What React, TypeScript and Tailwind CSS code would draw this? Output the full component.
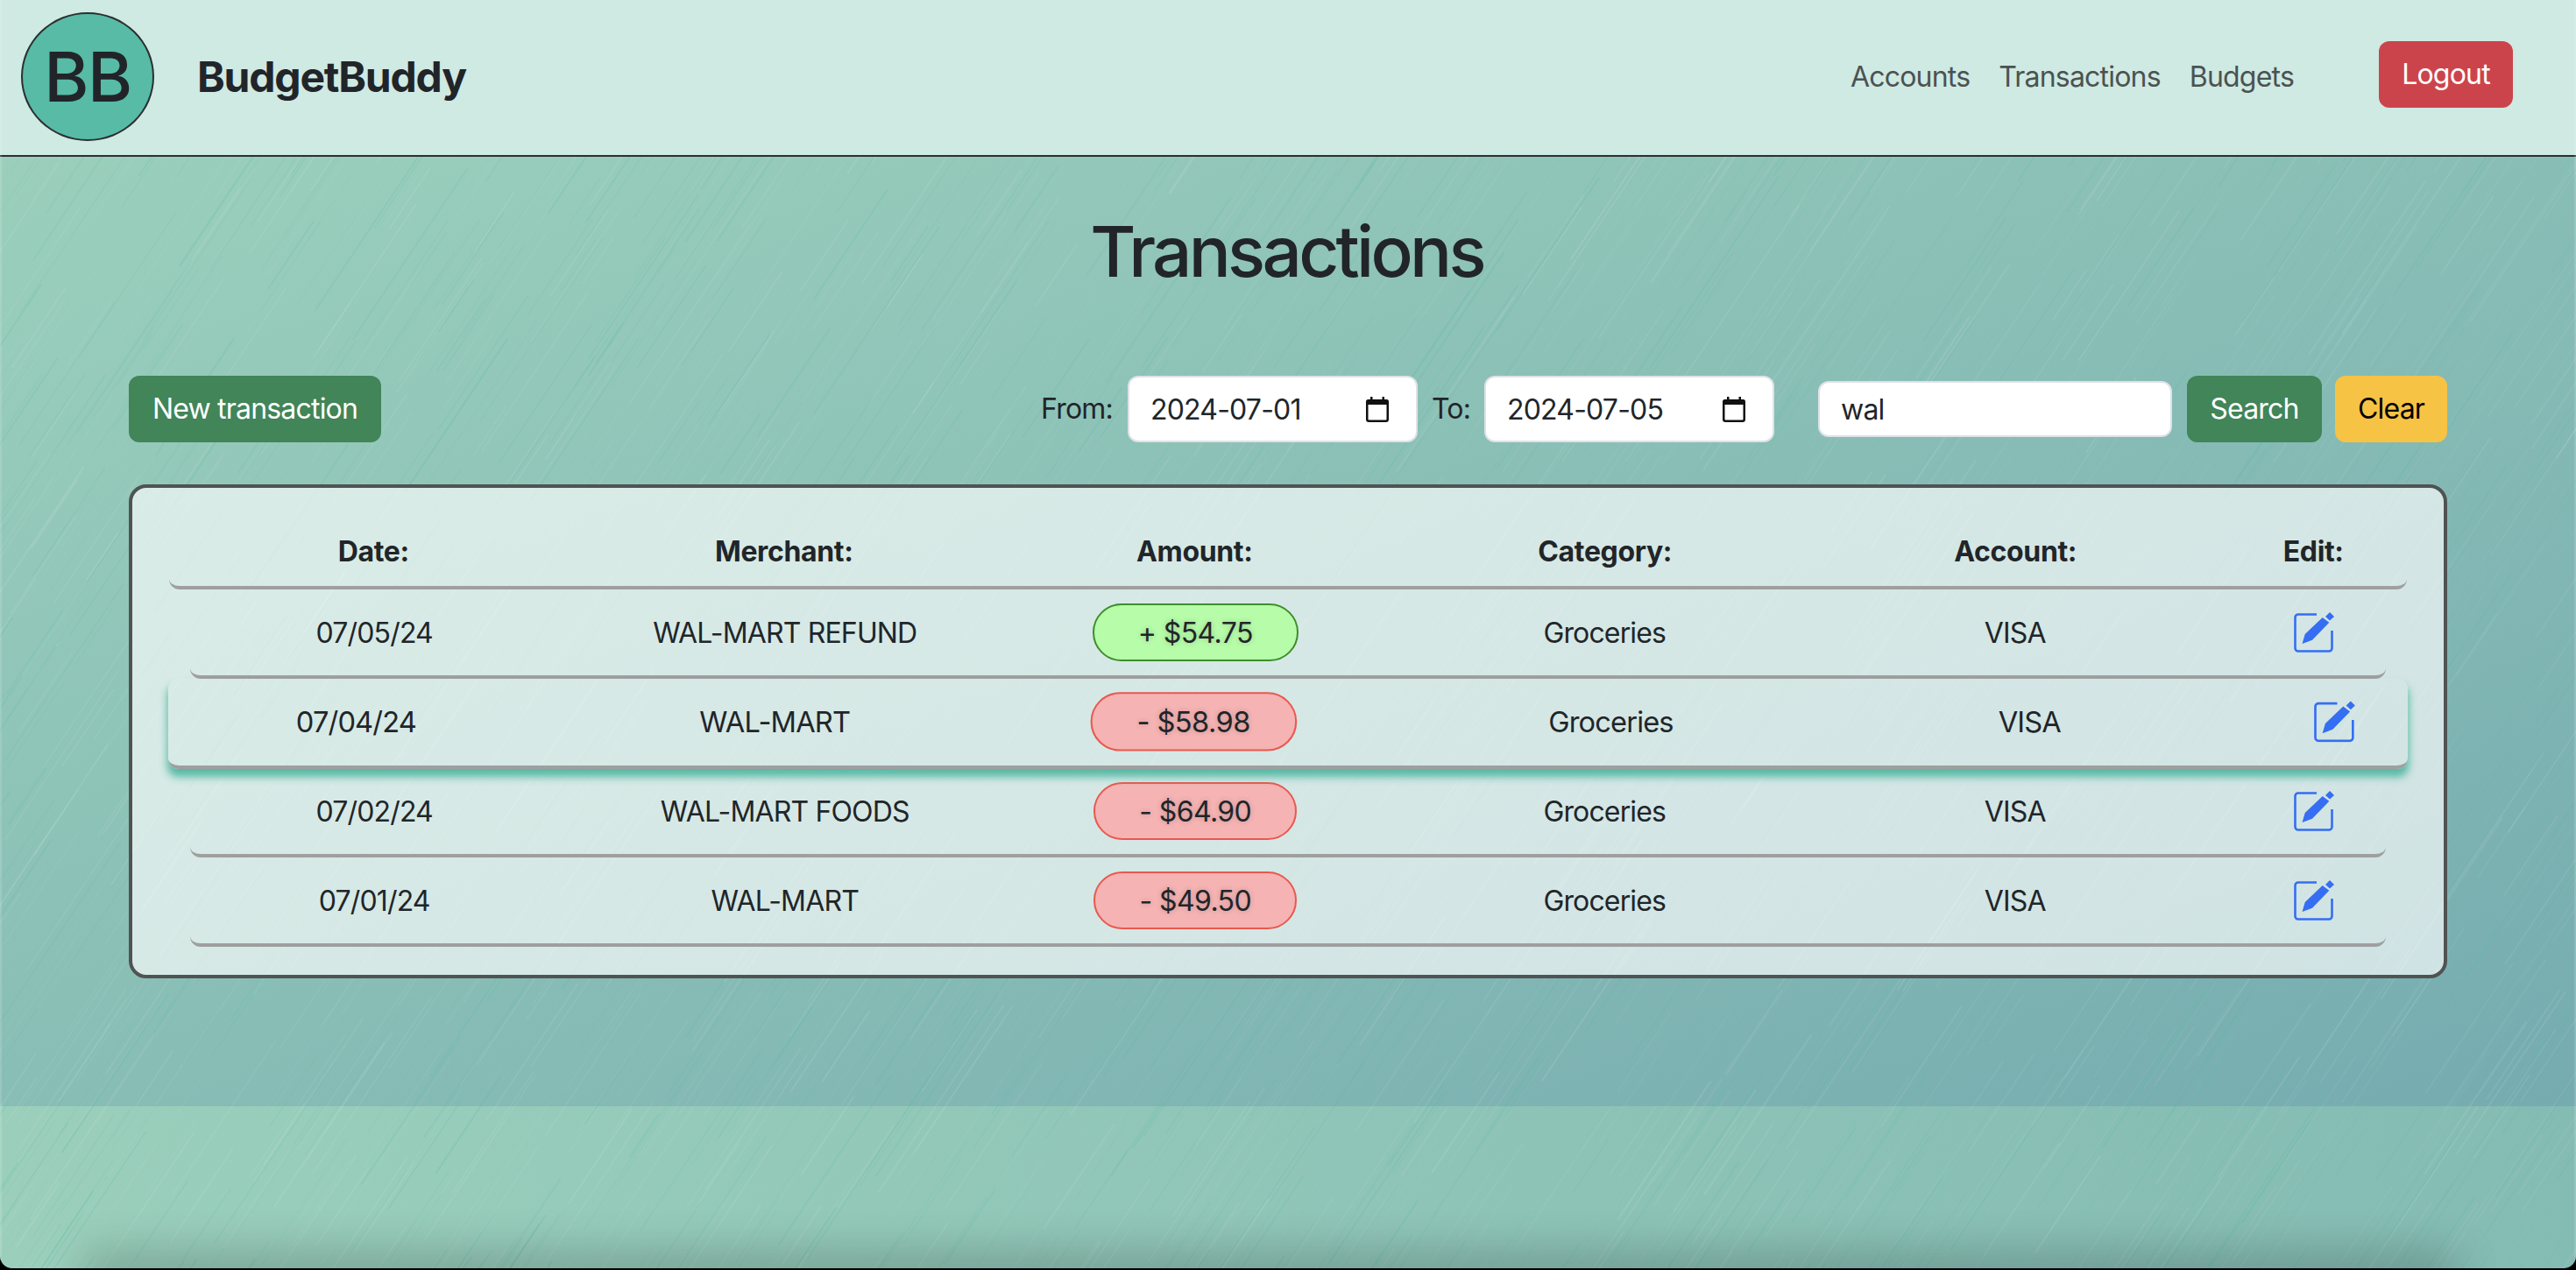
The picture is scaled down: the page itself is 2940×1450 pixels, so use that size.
import React from "react";

// seeded so the streaks stay the same on every render
function makeStreaks() {
  let seed = 42;
  const rnd = () => {
    seed = (seed * 16807) % 2147483647;
    return seed / 2147483647;
  };
  const out: { x: number; y: number; len: number; w: number; color: string; op: number }[] = [];
  for (let i = 0; i < 2600; i++) {
    const teal = rnd() < 0.45;
    out.push({
      x: rnd() * 3200,
      y: rnd() * 1500,
      len: 50 + rnd() * 170,
      w: 0.6 + rnd() * 1.4,
      color: teal ? "#5cbba6" : "#ffffff",
      op: teal ? 0.08 + rnd() * 0.18 : 0.03 + rnd() * 0.07,
    });
  }
  return out;
}

const streaks = makeStreaks();

function Streaks({ className }: { className: string }) {
  return (
    <svg className={className} width="2940" height="1450" viewBox="0 0 2940 1450" fill="none">
      {streaks.map((s, i) => (
        <line
          key={i}
          x1={s.x}
          y1={s.y}
          x2={s.x - s.len * 0.67}
          y2={s.y + s.len}
          stroke={s.color}
          strokeOpacity={s.op}
          strokeWidth={s.w}
        />
      ))}
    </svg>
  );
}

function EditIcon() {
  return (
    <svg width="47" height="46" viewBox="0 0 47 46" className="block">
      <path
        d="M26 2.5H5a3.5 3.5 0 0 0-3.5 3.5v35a3.5 3.5 0 0 0 3.5 3.5h35a3.5 3.5 0 0 0 3.5-3.5V21"
        fill="none"
        stroke="#356ef2"
        strokeWidth="2.6"
      />
      <path d="M9.5 36 12.7 25 32.7 6 40.3 11.7 21 31.7Z" fill="#356ef2" />
      <path d="M36 5 41 0 46 5 41 9.5Z" fill="#356ef2" />
    </svg>
  );
}

function CalendarIcon() {
  return (
    <svg width="26" height="29" viewBox="0 0 26 29" className="block shrink-0">
      <path d="M5 0h2.5v3H18.5V0H21v3h2.5A2.5 2.5 0 0 1 26 5.5V9H0V5.5A2.5 2.5 0 0 1 2.5 3H5Z" fill="#111" />
      <rect x="1.25" y="6" width="23.5" height="21.75" rx="2" fill="none" stroke="#111" strokeWidth="2.5" />
    </svg>
  );
}

function DateField({ value }: { value: string }) {
  return (
    <div className="flex h-[76px] w-[331px] items-center rounded-xl border-2 border-[#dee2e6] bg-white pl-[24px] pr-[31px]">
      <input readOnly value={value} className="w-full min-w-0 flex-1 bg-transparent pt-[2px] text-[32px] tracking-[-0.8px] text-[#212529] outline-none" />
      <CalendarIcon />
    </div>
  );
}

const cols = "grid grid-cols-[repeat(5,468.5px)_1fr] items-center text-center";

const rows = [
  { date: "07/05/24", merchant: "WAL-MART REFUND", amount: "+ $54.75", up: true },
  { date: "07/04/24", merchant: "WAL-MART", amount: "- $58.98", up: false, hover: true },
  { date: "07/02/24", merchant: "WAL-MART FOODS", amount: "- $64.90", up: false },
  { date: "07/01/24", merchant: "WAL-MART", amount: "- $49.50", up: false },
];

export default function App() {
  return (
    <div className="h-[1450px] w-full overflow-hidden bg-black font-['Inter',sans-serif] text-[#212529]">
      <div className="relative flex h-[1448px] flex-col overflow-hidden rounded-b-[14px]">
        <header className="flex h-[179px] shrink-0 items-center border-b-2 border-[#2b2f30] bg-[#cfe9e3] pb-[2px] pl-6 pr-[72px]">
          <div className="flex h-[147px] w-[152px] items-center justify-center rounded-[50%] border-2 border-[#2b2f30] bg-[#57bba6] text-[78px] font-medium leading-none tracking-[-1.5px]">
            BB
          </div>
          <div className="ml-[49px] text-[48px] font-bold leading-none tracking-[-1.2px]">BudgetBuddy</div>
          <nav className="ml-auto flex items-center gap-[33px] text-[32px] tracking-[-0.8px] text-[#4a5351]">
            <a>Accounts</a>
            <a>Transactions</a>
            <a>Budgets</a>
          </nav>
          <button className="mb-[6px] ml-[97px] h-[76px] w-[153px] rounded-xl bg-[#cc444b] text-[32px] tracking-[-0.8px] text-white">Logout</button>
        </header>

        <main className="relative h-[1084px] shrink-0 overflow-hidden bg-[linear-gradient(to_bottom_right,#9bcfbc,#76acb0)]">
          <Streaks className="absolute left-0 top-[-179px]" />
          <div className="relative px-[147px] pt-[60px]">
            <h1 className="pr-[3px] text-center text-[80px] font-medium leading-[96px] tracking-[-3.75px]">Transactions</h1>

            <div className="mt-[94px] flex items-center justify-between text-[32px] tracking-[-0.8px]">
              <button className="h-[76px] w-[288px] rounded-xl bg-[#418558] text-white">New transaction</button>
              <div className="flex items-center">
                <span className="mr-[17px]">From:</span>
                <DateField value="2024-07-01" />
                <span className="w-[76px] pl-[16px]">To:</span>
                <DateField value="2024-07-05" />
                <input
                  readOnly
                  value="wal"
                  className="ml-[50px] h-[64px] w-[404px] rounded-xl border-2 border-[#dee2e6] bg-white px-6 outline-none"
                />
                <button className="ml-[17px] h-[76px] w-[154px] rounded-xl bg-[#418558] text-white">Search</button>
                <button className="ml-[15px] h-[76px] w-[128px] rounded-xl bg-[#f6c344] text-black">Clear</button>
              </div>
            </div>

            <section className="mt-[48px] h-[564px] rounded-[20px] border-4 border-[#505353] bg-white/65 px-[42px] pt-[32px] text-[32px] tracking-[-0.85px]">
              <div className={`${cols} h-[84px] rounded-b-xl border-b-4 border-[#9f9f9f] pt-[2px] font-bold tracking-[-0.35px]`}>
                <div className="pr-[2px]">Date:</div>
                <div className="pr-[2px]">Merchant:</div>
                <div className="pr-[2px]">Amount:</div>
                <div className="pr-[2px]">Category:</div>
                <div className="pr-[2px]">Account:</div>
                <div className="pr-[2px]">Edit:</div>
              </div>
              {rows.map((r) => (
                <div
                  key={r.date}
                  className={
                    r.hover
                      ? "relative z-10 mx-6 h-[102px] scale-[1.02] rounded-xl border-b-4 border-[#9f9f9f] shadow-[0_8px_9px_#57b9a5]"
                      : "mx-6 h-[102px] rounded-b-xl border-b-4 border-[#9f9f9f]"
                  }
                >
                  <div className={`${cols} -mx-6 h-[98px]`}>
                    <div className="pt-[2px]">{r.date}</div>
                    <div className="pt-[2px]">{r.merchant}</div>
                    <div className="flex justify-center">
                      <span
                        className={
                          r.up
                            ? "rounded-full border-2 border-[#3e8e2c] bg-[#b6fca9] px-[50px] pb-[6px] pt-[8px] tracking-[-0.6px] [text-shadow:0_0_6px_rgba(0,0,0,0.2)]"
                            : "rounded-full border-2 border-[#e9584e] bg-[#f5b3b3] px-[50px] pb-[6px] pt-[8px] tracking-[-0.6px] [text-shadow:0_0_6px_rgba(0,0,0,0.2)]"
                        }
                      >
                        {r.amount}
                      </span>
                    </div>
                    <div className="pr-[3px] pt-[2px]">Groceries</div>
                    <div className="pr-[3px] pt-[2px]">VISA</div>
                    <div className="flex justify-center">
                      <EditIcon />
                    </div>
                  </div>
                </div>
              ))}
            </section>
          </div>
        </main>

        <footer className="relative flex-1 overflow-hidden bg-[linear-gradient(to_right,#9bcfbc,#84bbb3)]">
          <Streaks className="absolute left-0 top-[-1263px]" />
          <div className="absolute bottom-[-14px] left-[120px] right-[160px] h-[8px] shadow-[0_0_50px_24px_rgba(0,0,0,0.2)]" />
        </footer>

        <div className="absolute inset-y-0 left-0 w-[2px] bg-white/15" />
        <div className="absolute inset-y-0 right-0 w-[2px] bg-white/15" />
      </div>
    </div>
  );
}
